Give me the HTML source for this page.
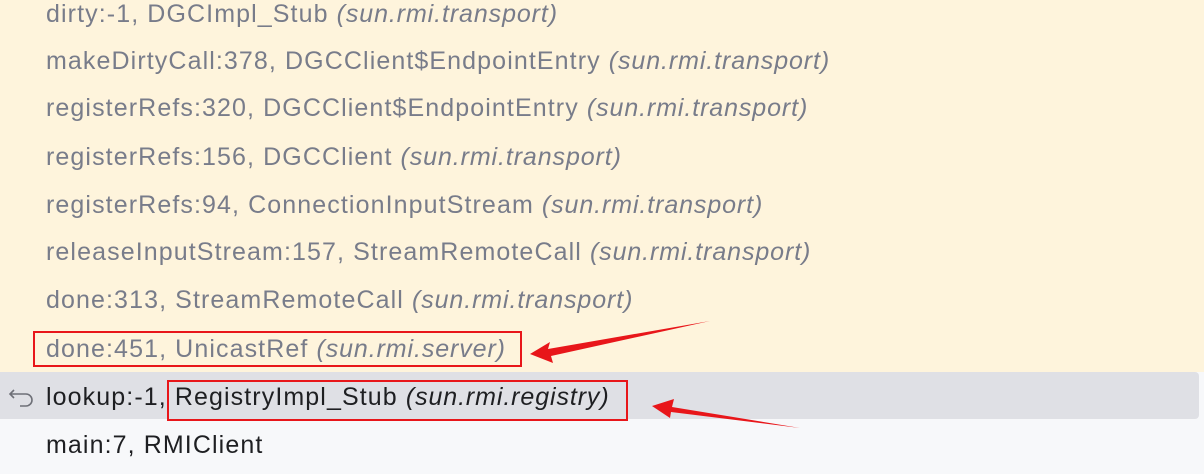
<html><head><style>
body{margin:0;width:1204px;height:474px;overflow:hidden;background:#f7f8fa;font-family:"Liberation Sans",sans-serif;font-size:25px;position:relative}
.bg{position:absolute;left:0;top:0;width:1204px;height:372px;background:#fef4dc}
.sel{position:absolute;left:0;top:372px;width:1199px;height:47px;background:#dfe0e5;border-radius:0 4px 4px 0}
.r{position:absolute;left:46px;height:48px;line-height:48px;color:#787c8a;white-space:nowrap;letter-spacing:1.1px}
.r i{font-style:italic;letter-spacing:0.9px}
.k{color:#1e1f22}
.box{position:absolute;border:2px solid #e8161a}
</style></head><body>
<div class="bg"></div><div class="sel"></div>
<div class="r" style="top:-10px">dirty:-1, DGCImpl_Stub <i>(sun.rmi.transport)</i></div>
<div class="r" style="top:37px">makeDirtyCall:378, DGCClient$EndpointEntry <i>(sun.rmi.transport)</i></div>
<div class="r" style="top:84px">registerRefs:320, DGCClient$EndpointEntry <i>(sun.rmi.transport)</i></div>
<div class="r" style="top:133px">registerRefs:156, DGCClient <i>(sun.rmi.transport)</i></div>
<div class="r" style="top:181px">registerRefs:94, ConnectionInputStream <i>(sun.rmi.transport)</i></div>
<div class="r" style="top:228px">releaseInputStream:157, StreamRemoteCall <i>(sun.rmi.transport)</i></div>
<div class="r" style="top:276px">done:313, StreamRemoteCall <i>(sun.rmi.transport)</i></div>
<div class="r" style="top:325px">done:451, UnicastRef <i>(sun.rmi.server)</i></div>
<div class="r k" style="top:373px">lookup:-1, RegistryImpl_Stub <i>(sun.rmi.registry)</i></div>
<div class="r k" style="top:421px">main:7, RMIClient</div>
<svg style="position:absolute;left:0;top:0" width="1204" height="474">
<path d="M14 390 L10 394 L14 398 M10 394 H26 a6 6 0 0 1 0 12 H20" fill="none" stroke="#6e7078" stroke-width="1.6"/>
<path d="M710 321 L548 349 L550 342 L530 354 L553 363 L551 356 Z" fill="#e8161a"/>
<path d="M800 428 L672 407 L674 399 L652 406 L670 418 L671 412 Z" fill="#e8161a"/>
</svg>
<div class="box" style="left:33px;top:331px;width:485px;height:32px"></div>
<div class="box" style="left:167px;top:380px;width:457px;height:37px"></div>
</body></html>
